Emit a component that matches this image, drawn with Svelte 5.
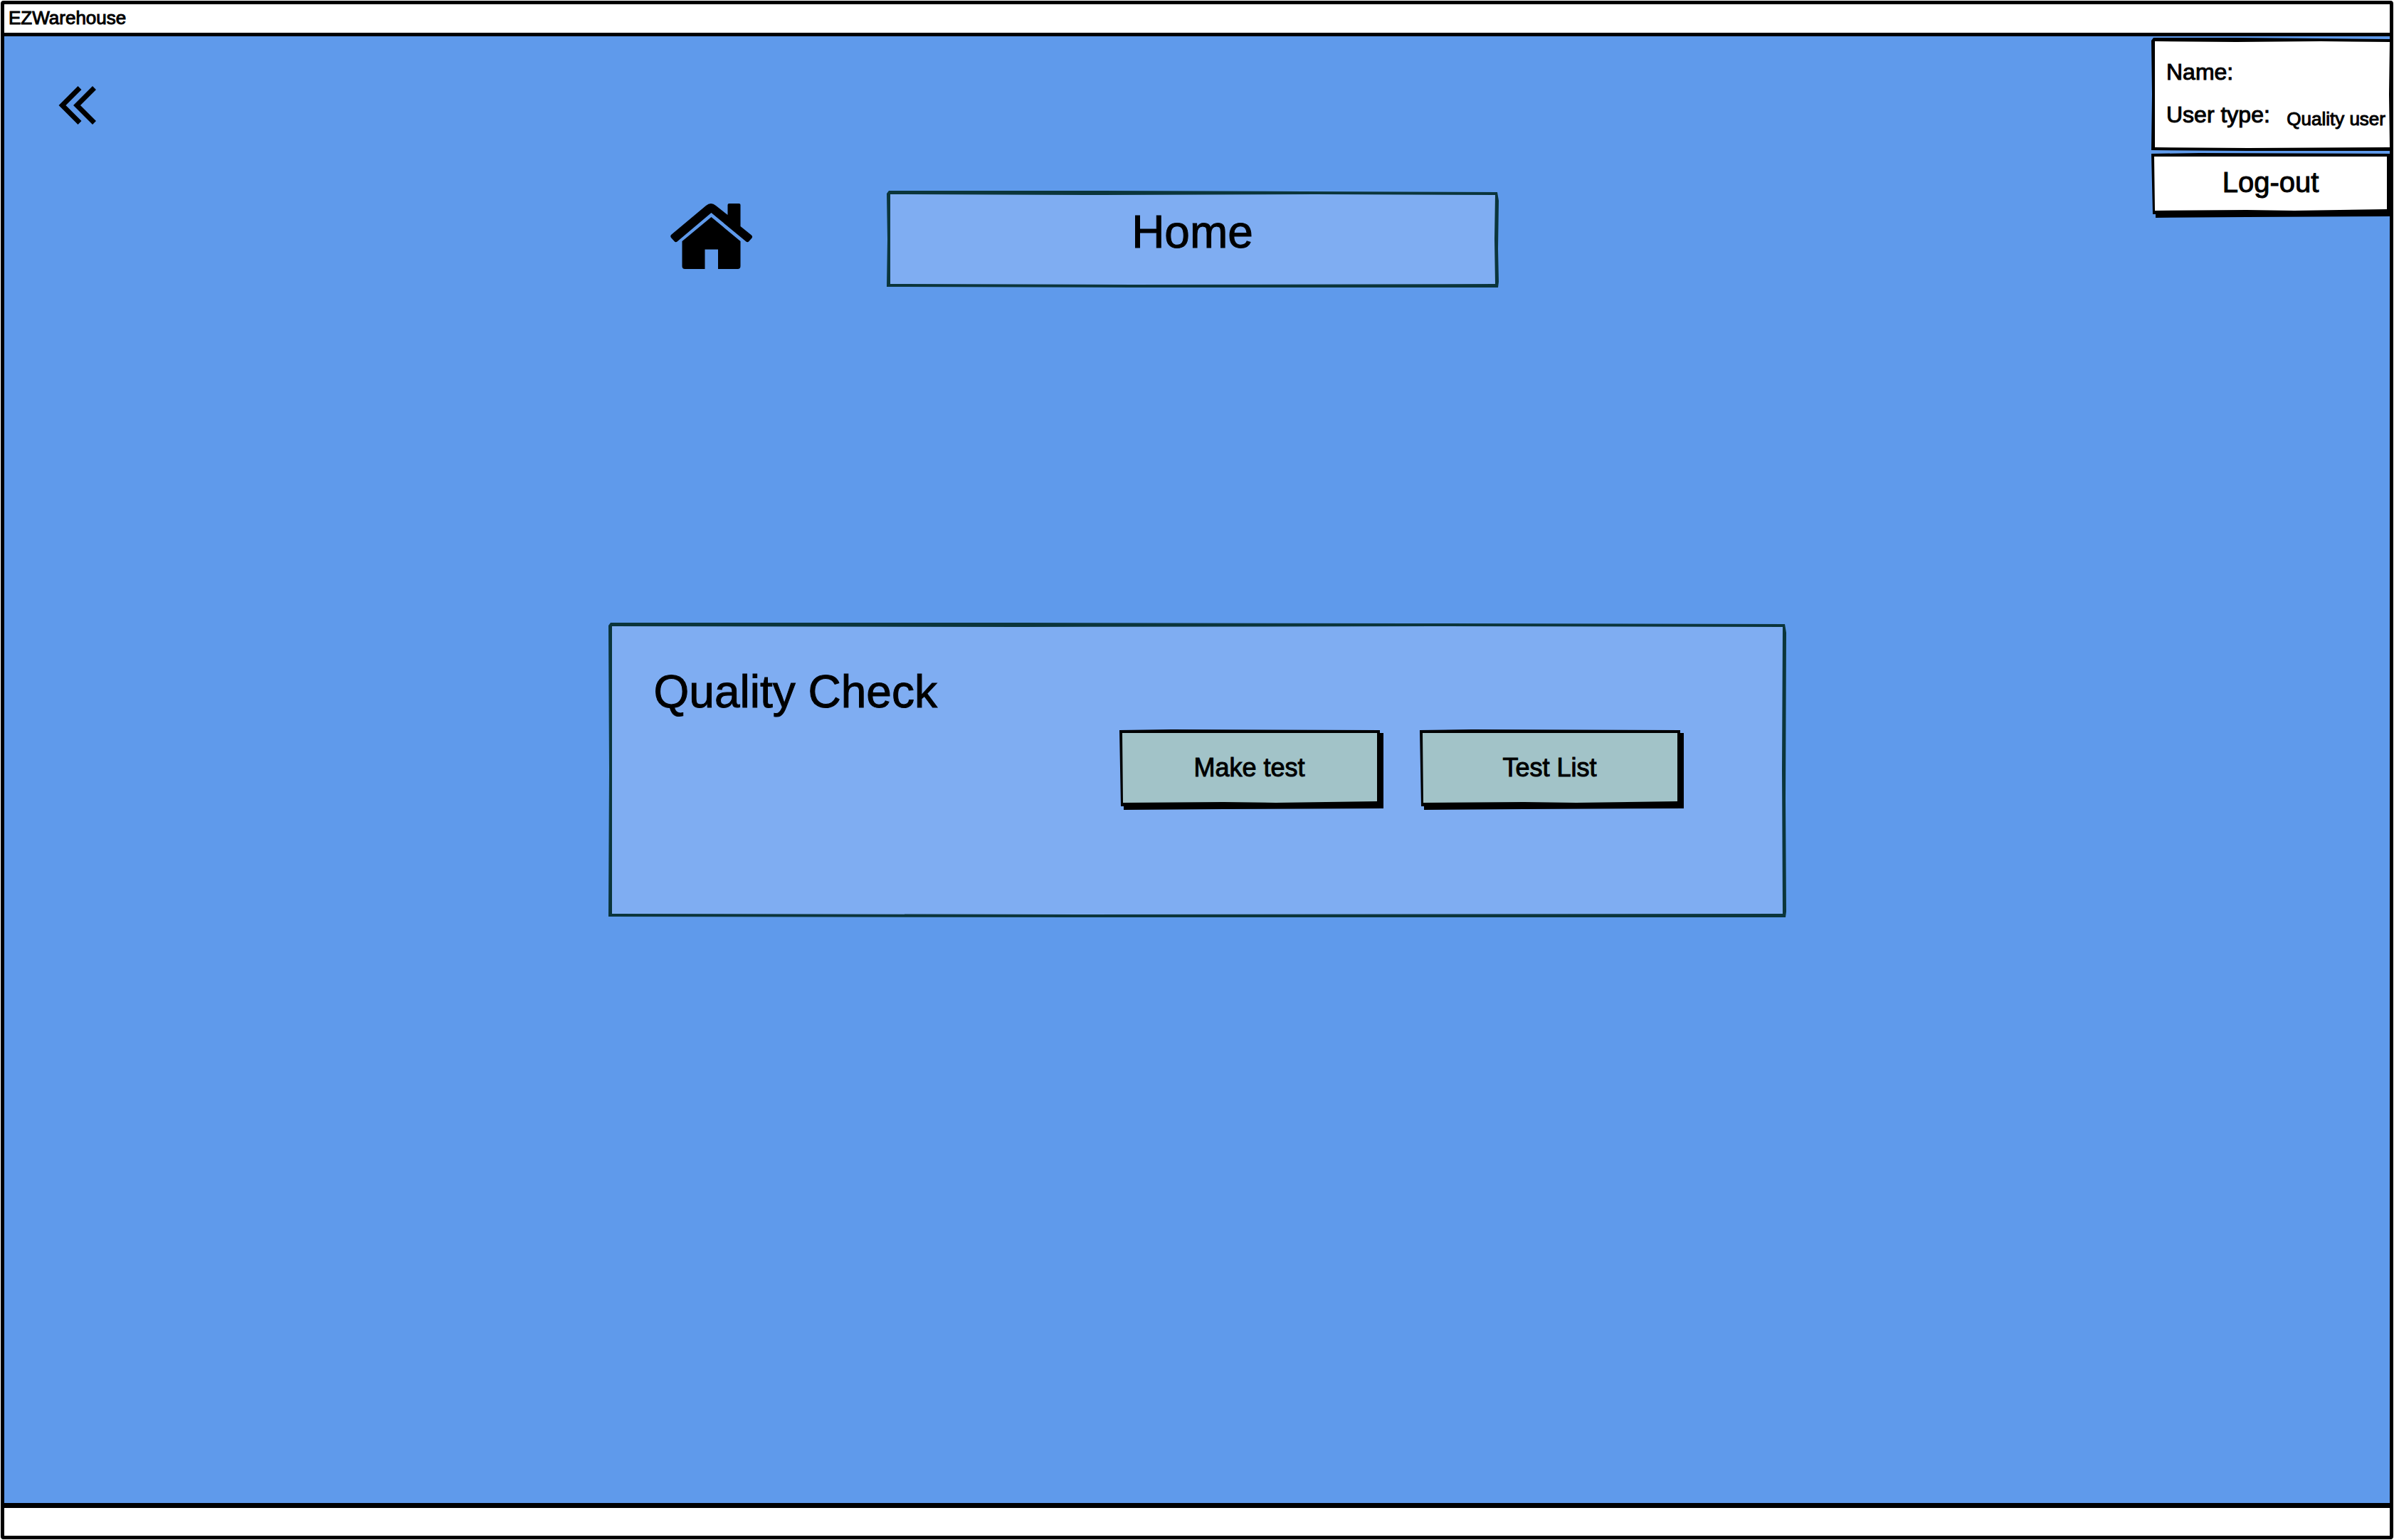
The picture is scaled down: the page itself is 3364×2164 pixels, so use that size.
<script>
  const ink = '#000000';
  const pine = '#0b353b';

  // Ring between a slightly uneven outer and inner edge, like a pen-drawn box.
  function outline(w, h, t) {
    const outer = `M3 0 L${w * 0.35} 0 L${w * 0.68} 1 L${w - 2} 2 L${w} 14 L${w - 1} ${h * 0.6} L${w} ${h - 8} L${w - 1} ${h} L${w * 0.4} ${h} L0 ${h - 1} L1 ${h * 0.5} L0 4 Z`;
    const inner = `M${t} ${t} L${t} ${h * 0.5} L${t} ${h - t} L${w * 0.4} ${h - t + 1} L${w - t} ${h - t} L${w - t - 1} ${h * 0.5} L${w - t} ${t + 1} L${w * 0.7} ${t} L${w * 0.35} ${t + 1} Z`;
    return `${outer} ${inner}`;
  }

  // Buttons lean a little: the left edge drifts right on its way down.
  function buttonOutline(w, h) {
    return `M0 1 L${w * 0.2} 0 L${w} 1 L${w} ${h - 2} L${w * 0.4} ${h} L2 ${h} Z M4 5 L5 ${h - 5} L${w * 0.4} ${h - 6} L${w * 0.6} ${h - 5} L${w - 4} ${h - 7} L${w - 4} 5 L${w * 0.5} 5 Z`;
  }

  const tests = ['Make test', 'Test List'];
</script>

{#snippet box(w, h, line, fill)}
  <svg class="sketch" viewBox="0 0 {w} {h}" preserveAspectRatio="none" aria-hidden="true">
    <rect x="3" y="3" width={w - 6} height={h - 6} {fill} />
    <path d={outline(w, h, 5)} fill={line} fill-rule="evenodd" />
  </svg>
{/snippet}

{#snippet raised(w, h, fill)}
  <svg class="sketch" viewBox="0 0 {w} {h}" preserveAspectRatio="none" aria-hidden="true">
    <path d="M6 5 H{w + 5} V{h + 3} L{w * 0.4} {h + 4} L6 {h + 5} Z" fill={ink} />
    <rect x="3" y="3" width={w - 5} height={h - 6} {fill} />
    <path d={buttonOutline(w, h)} fill={ink} fill-rule="evenodd" />
  </svg>
{/snippet}

<div class="window">
  <header class="titlebar">EZWarehouse</header>

  <main>
    <nav>
      <button class="back" aria-label="Back">
        <svg viewBox="0 0 54 56" width="54" height="56" aria-hidden="true">
          <g fill="none" stroke="#000" stroke-width="7" stroke-linejoin="miter">
            <path d="M30 3.500 L5.500 28 L30 52.500" />
            <path d="M50.500 3.500 L26 28 L50.500 52.500" />
          </g>
        </svg>
      </button>
    </nav>

    <div class="content">
      <div class="heading">
        <a class="home" href="#home" aria-label="Home">
          <svg viewBox="0 0 116 100" width="116" height="100" aria-hidden="true">
            <path d="M50 3 Q57 -3 64 3 L80.500 16 V2 Q80.500 0 82.500 0 H96.500 Q98.500 0 98.500 2 V32 L114 44.500 Q116 46.500 114.500 48.500 L110 53.500 Q108.500 55 106.500 53.500 L57.500 13 L9.500 53.500 Q7.500 55 6 53.500 L1 48 Q-.500 46 1 44 Z" />
            <path d="M57.500 19 L98.500 53 V88 Q98.500 92 94.500 92 H67 V64.500 H48.500 V92 H20.500 Q16.500 92 16.500 88 V53 Z" />
          </svg>
        </a>
        <div class="banner">
          {@render box(860, 136, pine, '#7fadf2')}
          <h1>Home</h1>
        </div>
      </div>

      <section class="panel">
        {@render box(1655, 414, pine, '#7fadf2')}
        <h2>Quality Check</h2>
        <div class="actions">
          {#each tests as label}
            <button class="action">
              {@render raised(366, 108, '#a2c3c8')}
              <span>{label}</span>
            </button>
          {/each}
        </div>
      </section>
    </div>

    <aside>
      <div class="user">
        {@render box(340, 159, ink, '#ffffff')}
        <dl>
          <div class="field"><dt>Name:</dt><dd></dd></div>
          <div class="field"><dt>User type:</dt><dd>Quality user</dd></div>
        </dl>
      </div>
      <button class="logout">
        {@render raised(335, 86, '#ffffff')}
        <span>Log-out</span>
      </button>
    </aside>
  </main>

  <footer></footer>
</div>

<style>
  :global(body) {
    margin: 0;
    background: #fff;
  }

  * {
    box-sizing: border-box;
  }

  .window {
    display: flex;
    flex-direction: column;
    min-height: calc(100vh - 2px);
    margin: 1px;
    border: 5px solid #000;
    border-radius: 4px;
    color: #000;
    background: #5f9aeb;
    font-family: "Liberation Sans", Arial, sans-serif;
    font-weight: 400;
    -webkit-text-stroke: 1px #000;
    stroke-linejoin: round;
  }

  .titlebar {
    height: 45px;
    padding-left: 6px;
    border-bottom: 5px solid #000;
    background: #fff;
    font-size: 26px;
    line-height: 38px;
  }

  footer {
    height: 46px;
    border-top: 7px solid #000;
    background: #fff;
  }

  main {
    flex: 1;
    display: grid;
    grid-template-columns: 335px minmax(0, 1fr) 335px;
    align-items: start;
  }

  button {
    position: relative;
    padding: 0;
    border: 0;
    background: none;
    color: inherit;
    font: inherit;
    cursor: pointer;
  }

  .sketch {
    position: absolute;
    inset: 0;
    width: 100%;
    height: 100%;
    overflow: visible;
  }

  h1,
  h2,
  dl,
  button span {
    position: relative;
    margin: 0;
    font-weight: 400;
  }

  nav {
    padding: 69px 0 0 76px;
  }

  .back svg,
  .home svg {
    display: block;
  }

  .content {
    display: flex;
    flex-direction: column;
    gap: 471px;
    width: 100%;
    max-width: 1655px;
    margin: 0 auto;
    padding-top: 217px;
  }

  .heading {
    display: flex;
    align-items: center;
    padding-left: 87px;
    gap: 188px;
  }

  .banner {
    position: relative;
    flex: 0 1 860px;
    height: 136px;
    padding-top: 26px;
    text-align: center;
  }

  h1,
  h2 {
    font-size: 64px;
    line-height: 64px;
  }

  .panel {
    position: relative;
    display: flex;
    justify-content: space-between;
    height: 414px;
    padding: 0 149px 0 64px;
  }

  h2 {
    padding-top: 65px;
  }

  .actions {
    display: flex;
    gap: 56px;
    padding-top: 150px;
  }

  .action {
    width: 366px;
    height: 108px;
    font-size: 36px;
  }

  aside {
    display: flex;
    flex-direction: column;
    gap: 3px;
    padding-top: 2px;
  }

  .user {
    position: relative;
    height: 159px;
    margin-right: -5px;
    padding: 32px 11px 0 21px;
  }

  .field {
    display: flex;
    justify-content: space-between;
    align-items: flex-end;
    height: 60px;
    white-space: nowrap;
  }

  .field:first-child {
    height: 36px;
  }

  dt {
    font-size: 32px;
    line-height: 40px;
  }

  dd {
    margin: 0;
    font-size: 26px;
    line-height: 28px;
  }

  .logout {
    height: 86px;
    padding-bottom: 4px;
    font-size: 40px;
  }
</style>
